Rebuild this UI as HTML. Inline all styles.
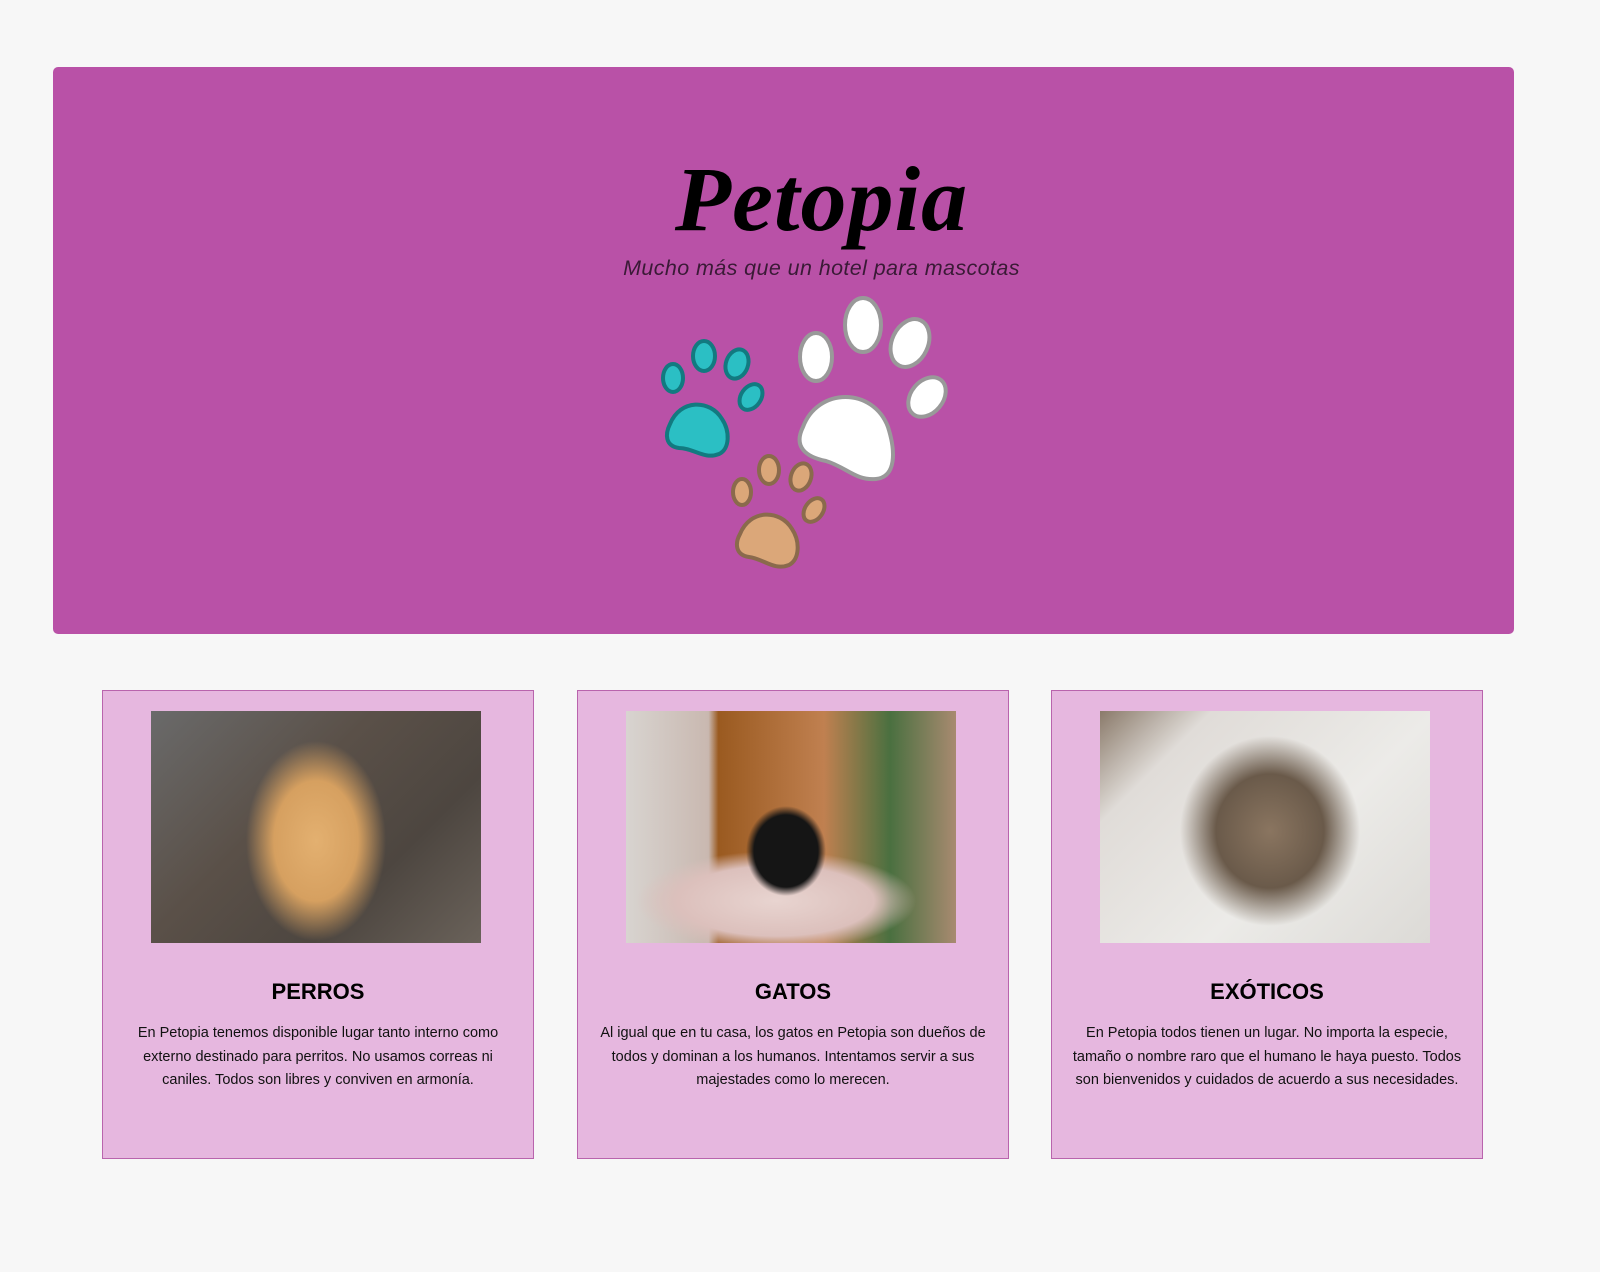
<!DOCTYPE html>
<html><head><meta charset="utf-8"><style>
body{margin:0;background:#f7f7f7;width:1600px;height:1272px;position:relative;font-family:"Liberation Sans",sans-serif;overflow:hidden}
.hero{position:absolute;left:53px;top:67px;width:1461px;height:567px;background:#b951a7;border-radius:5px}
.title{position:absolute;left:38px;width:1461px;top:79px;text-align:center;font-family:"Liberation Serif",serif;font-style:italic;font-weight:bold;font-size:92px;color:#000;letter-spacing:1px}
.sub{position:absolute;left:38px;width:1461px;top:189px;text-align:center;font-style:italic;font-size:21.5px;color:#3a1a36;letter-spacing:0.4px}
.card{position:absolute;top:690px;width:432px;height:469px;background:#e6b7df;border:1px solid #b964ad;box-sizing:border-box}
.img{position:absolute;top:20px;left:48px;width:330px;height:232px}
.card h2{position:absolute;top:288px;left:0;width:100%;margin:0;text-align:center;font-size:22px;font-weight:bold}
.card p{position:absolute;top:331px;left:18px;right:18px;margin:0;text-align:center;font-size:14.5px;line-height:23.5px;color:#111}
</style></head><body>
<div class="hero">
<div class="title">Petopia</div>
<div class="sub">Mucho más que un hotel para mascotas</div>
<svg style="position:absolute;left:0;top:0" width="1461" height="567">
<g fill="#2bbfc4" stroke="#127a80" stroke-width="4">
<ellipse cx="620" cy="311" rx="10" ry="14"/><ellipse cx="651" cy="289" rx="11" ry="15"/><ellipse cx="684" cy="297" rx="11" ry="15" transform="rotate(20 684 297)"/><ellipse cx="698" cy="330" rx="10" ry="14" transform="rotate(35 698 330)"/>
<path d="M617 357c10-25 40-25 52-5 8 12 8 30-3 35-15 6-25-6-40-6-14-2-14-14-9-24z"/></g>
<g fill="#fff" stroke="#999" stroke-width="4">
<ellipse cx="763" cy="290" rx="16" ry="24"/><ellipse cx="810" cy="258" rx="18" ry="27"/><ellipse cx="857" cy="276" rx="18" ry="25" transform="rotate(25 857 276)"/><ellipse cx="874" cy="330" rx="16" ry="22" transform="rotate(40 874 330)"/>
<path d="M750 360c15-40 70-40 85 0 8 25 8 50-12 52-20 2-30-12-50-18-20-4-33-14-23-34z"/></g>
<g fill="#dba779" stroke="#8a6a4c" stroke-width="4">
<ellipse cx="689" cy="425" rx="9" ry="13"/><ellipse cx="716" cy="403" rx="10" ry="14"/><ellipse cx="748" cy="410" rx="10" ry="14" transform="rotate(20 748 410)"/><ellipse cx="761" cy="443" rx="9" ry="13" transform="rotate(35 761 443)"/>
<path d="M687 467c10-25 40-25 52-5 8 12 8 30-3 36-15 6-25-6-40-8-14-2-14-14-9-23z"/></g>
</svg>
</div>
<div class="card" style="left:102px"><div class="img" style="background:radial-gradient(ellipse 70px 100px at 165px 130px,#e3b070 0,#d6a060 60%,transparent 100%),linear-gradient(135deg,#6a6a6a,#5a5048 40%,#4d4640 70%,#6a625a)"></div><h2>PERROS</h2><p>En Petopia tenemos disponible lugar tanto interno como externo destinado para perritos. No usamos correas ni caniles. Todos son libres y conviven en armonía.</p></div>
<div class="card" style="left:577px"><div class="img" style="background:radial-gradient(ellipse 40px 45px at 160px 140px,#151515 0,#151515 80%,transparent 100%),radial-gradient(ellipse 140px 50px at 150px 190px,#e8d4d0 0,#dcc0bc 70%,transparent 100%),linear-gradient(90deg,#d8d4d0 0,#c9b8b0 25%,#9a5a20 28%,#c08050 60%,#4a7040 80%,#a88a70)"></div><h2>GATOS</h2><p>Al igual que en tu casa, los gatos en Petopia son dueños de todos y dominan a los humanos. Intentamos servir a sus majestades como lo merecen.</p></div>
<div class="card" style="left:1051px"><div class="img" style="background:radial-gradient(ellipse 90px 95px at 170px 120px,#8a7560 0,#6a5a4a 60%,transparent 100%),linear-gradient(135deg,#8a7a6a 0,#e0dcd8 20%,#ecebe8 60%,#dcdad6)"></div><h2>EXÓTICOS</h2><p>En Petopia todos tienen un lugar. No importa la especie, tamaño o nombre raro que el humano le haya puesto. Todos son bienvenidos y cuidados de acuerdo a sus necesidades.</p></div>
</body></html>
